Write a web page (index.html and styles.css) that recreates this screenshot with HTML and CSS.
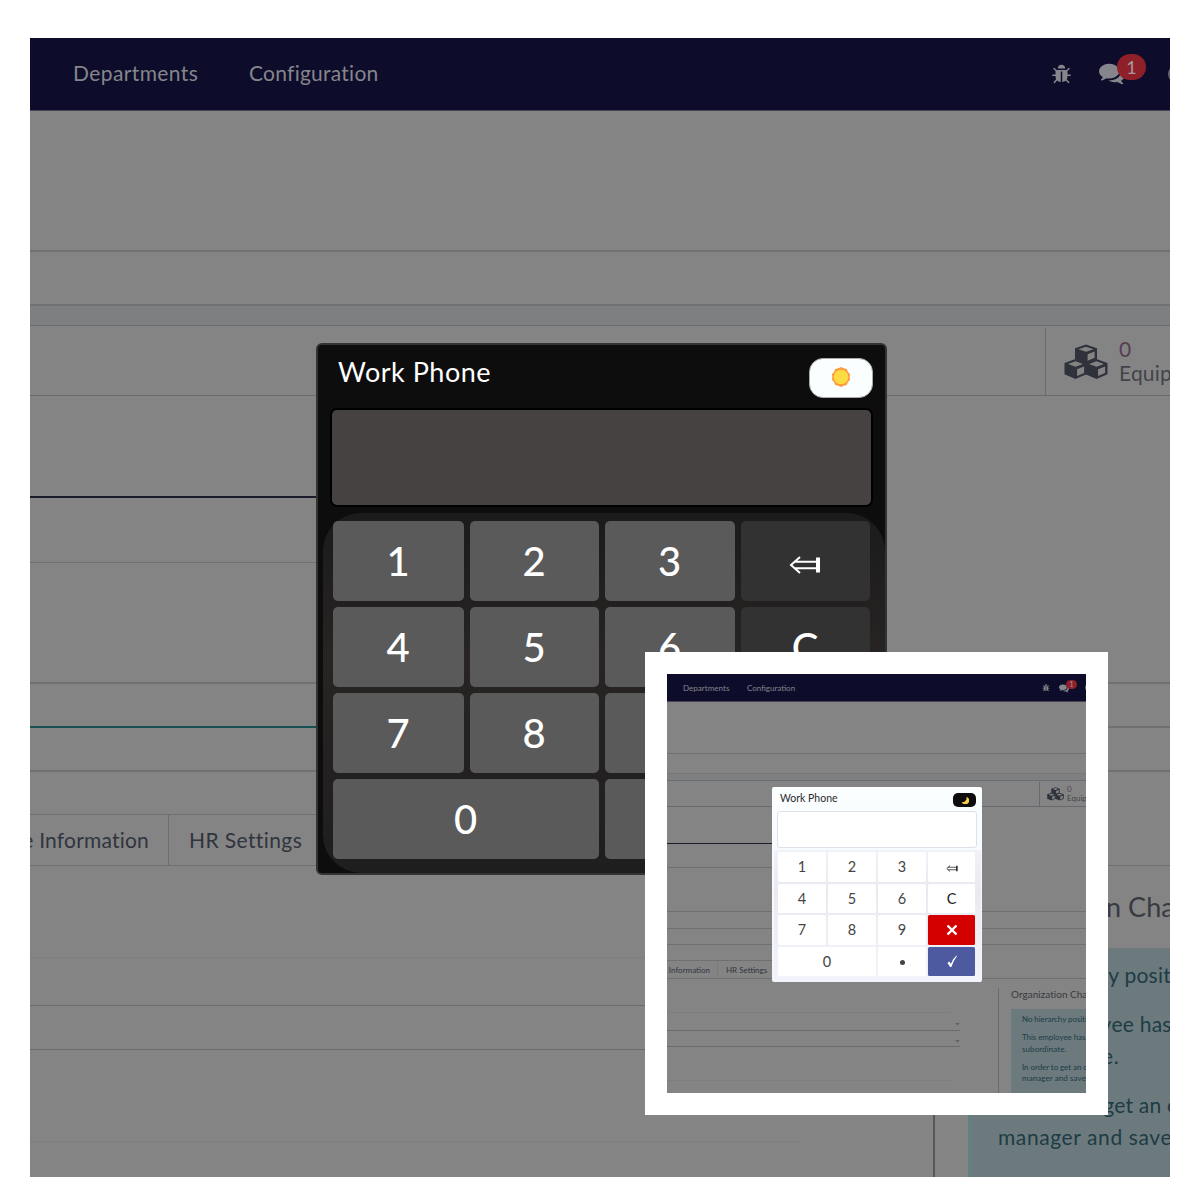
FILE: index.html
```html
<!DOCTYPE html>
<html lang="en">
<head>
<meta charset="utf-8">
<title>Work Phone keypad</title>
<link rel="stylesheet" href="styles.css">
</head>
<body>
<svg class="sprite" aria-hidden="true">
  <symbol id="bug" viewBox="0 0 1792 1792"><path d="M1696 960q0 26-19 45t-45 19h-224q0 171-67 290l208 209q19 19 19 45t-19 45q-18 19-45 19t-45-19l-198-197q-5 5-15 13t-42 28.500-65 36.500-82 29-97 13v-896h-128v896q-51 0-101.500-13.500t-87-33-66-39-43.500-32.500l-15-14-183 207q-20 21-48 21-24 0-43-16-19-18-20.500-44.500t15.500-46.500l202-227q-58-114-58-274h-224q-26 0-45-19t-19-45 19-45 45-19h224v-294l-173-173q-19-19-19-45t19-45 45-19 45 19l173 173h844l173-173q19-19 45-19t45 19 19 45-19 45l-173 173v294h224q26 0 45 19t19 45zm-480-576h-640q0-133 93.500-226.500t226.500-93.500 226.500 93.500 93.500 226.500z"/></symbol>
  <symbol id="comments" viewBox="0 0 1792 1792"><path d="M1408 768q0 139-94 257t-256.500 186.500-353.500 68.500q-86 0-176-16-124 88-278 128-36 9-86 16h-3q-11 0-20.500-8t-11.500-21q-1-3-1-6.500t.5-6.500 2-6l2.500-5 3.500-5.500 4-5 4.500-5 4-4.500q5-6 23-25t26-29.500 22.500-29 25-38.500 20.500-44q-124-72-195-177t-71-224q0-139 94-257t256.500-186.500 353.500-68.500 353.500 68.500 256.500 186.500 94 257zm384 256q0 120-71 224.500t-195 176.500q10 24 20.500 44t25 38.500 22.500 29 26 29.500 23 25q1 1 4 4.500t4.500 5 4 5 3.500 5.500l2.500 5 2 6 .5 6.500-1 6.500q-3 14-13 22t-22 7q-50-7-86-16-154-40-278-128-90 16-176 16-271 0-472-132 58 4 88 4 161 0 309-45t264-129q125-92 192-212t67-254q0-77-23-152 129 71 204 178t75 230z"/></symbol>
  <symbol id="cube" viewBox="0 0 24 24" preserveAspectRatio="none"><path fill="currentColor" d="M12 .5 23 5v13L12 23.500 1 18V5z"/><path fill="#848484" d="M12 3.200 19.500 6.200 12 9.400 4.500 6.200zM13.600 12.200 20.600 9v7.600l-7 3.500z"/></symbol>
  <symbol id="cubes" viewBox="0 0 44 36"><use href="#cube" x="10" y="0" width="24" height="20"/><use href="#cube" x="-.5" y="14.500" width="24" height="21"/><use href="#cube" x="20.500" y="14.500" width="24" height="21"/></symbol>
  <symbol id="back" viewBox="0 0 32 18"><path fill="none" stroke="currentColor" stroke-width="2" d="M11 1 2 9l9 8M5 5.700h24M5 12.300h24"/><path fill="currentColor" d="M27 1.500h4v15h-4z"/></symbol>
  <symbol id="sun" viewBox="0 0 20 20"><path fill="#ff9a3c" d="m10 0 2.600 1.300 3.200.7 1.200 2.900 2 2-.3 3.100.3 3.100-2 2-1.200 2.900-3.200.7L10 20l-2.600-1.300-3.200-.7L3 15.100l-2-2 .3-3.100L1 6.900l2-2L4.200 2l3.200-.7z"/><circle cx="10" cy="10" r="7.300" fill="#ffdb43"/></symbol>
  <symbol id="moon" viewBox="0 0 10 10"><path fill="#f8cf3c" d="M6.800.8a5 5 0 1 1-6 6.900A5.500 5.500 0 0 0 6.800.8z"/></symbol>
  <symbol id="cross" viewBox="0 0 12 12"><path fill="none" stroke="#fff" stroke-width="2.400" d="m1.500 1.500 9 9m0-9-9 9"/></symbol>
  <symbol id="check" viewBox="0 0 12 14"><path fill="#fff" d="M1 8.500 3.400 7l1.300 2.600Q6.700 4 10.600.8h1Q7.500 6 5.300 13H3.900Q2.900 10.500 1 8.500z"/></symbol>
</svg>

<main class="shot large">
  <header class="topbar">
    <nav class="menu"><span class="m1">Departments</span><span class="m2">Configuration</span></nav>
    <svg class="bug"><use href="#bug"/></svg>
    <span class="chat"><svg><use href="#comments"/></svg><b>1</b></span>
    <i class="dot"></i>
  </header>
  <div class="crumbs"></div>
  <div class="pager"></div>
  <div class="gap"></div>
  <div class="stats"><div class="stat"><svg><use href="#cubes"/></svg><p><em>0</em><span>Equipment</span></p></div></div>
  <div class="form">
    <div class="left">
      <div class="r1"></div><div class="r2"></div><div class="r3"></div><div class="r4"></div><div class="r5"></div><div class="r6"></div>
      <div class="tabs"><span class="t1">Private Information</span><span class="t2">HR Settings</span></div>
    </div>
    <div class="right"><div class="q1"></div><div class="q2"></div><div class="q3"></div><div class="q4"></div></div>
  </div>
  <div class="details">
    <div class="fields"><div class="f1"></div><div class="f2"></div><div class="f3"></div><div class="f4"></div></div>
    <aside class="org">
      <h2>Organization Chart</h2>
      <div class="note">
        <p class="n1">No hierarchy position.</p>
        <p class="n2">This employee has no<br><span>subordinate.</span></p>
        <p class="n3">In order to get an org<br><span>manager and save</span></p>
      </div>
    </aside>
  </div>

  <section class="pad dark">
    <div class="head"><h1>Work Phone</h1><span class="toggle"><svg><use href="#sun"/></svg></span></div>
    <div class="display"></div>
    <div class="keys">
      <span>1</span><span>2</span><span>3</span><span class="fn"><svg class="back"><use href="#back"/></svg></span>
      <span>4</span><span>5</span><span>6</span><span class="fn">C</span>
      <span>7</span><span>8</span><span></span><span></span>
      <span class="wide">0</span><span></span><span></span>
    </div>
  </section>
</main>

<div class="frame">
<div class="shot small">
  <header class="topbar">
    <nav class="menu"><span class="m1">Departments</span><span class="m2">Configuration</span></nav>
    <svg class="bug"><use href="#bug"/></svg>
    <span class="chat"><svg><use href="#comments"/></svg><b>1</b></span>
    <i class="dot"></i>
  </header>
  <div class="crumbs"></div>
  <div class="pager"></div>
  <div class="gap"></div>
  <div class="stats"><div class="stat"><svg><use href="#cubes"/></svg><p><em>0</em><span>Equipment</span></p></div></div>
  <div class="form">
    <div class="left">
      <div class="r1"></div><div class="r2"></div><div class="r3"></div><div class="r4"></div><div class="r5"></div><div class="r6"></div>
      <div class="tabs"><span class="t1">Private Information</span><span class="t2">HR Settings</span></div>
    </div>
    <div class="right"><div class="q1"></div><div class="q2"></div><div class="q3"></div><div class="q4"></div></div>
  </div>
  <div class="details">
    <div class="fields"><div class="f1"></div><div class="f2"><i class="caret"></i></div><div class="f3"><i class="caret"></i></div><div class="f4"></div></div>
    <aside class="org">
      <h2>Organization Chart</h2>
      <div class="note">
        <p class="n1">No hierarchy position.</p>
        <p class="n2">This employee has no<br><span>subordinate.</span></p>
        <p class="n3">In order to get an org<br><span>manager and save</span></p>
      </div>
    </aside>
  </div>

  <section class="pad light">
    <div class="head"><h1>Work Phone</h1><span class="toggle"><svg><use href="#moon"/></svg></span></div>
    <div class="display"></div>
    <div class="keys">
      <span>1</span><span>2</span><span>3</span><span class="fn"><svg class="back"><use href="#back"/></svg></span>
      <span>4</span><span>5</span><span>6</span><span class="fn">C</span>
      <span>7</span><span>8</span><span>9</span><span class="cancel"><svg><use href="#cross"/></svg></span>
      <span class="wide">0</span><span><i class="point"></i></span><span class="ok"><svg><use href="#check"/></svg></span>
    </div>
  </section>
</div>
</div>
</body>
</html>
```
FILE: styles.css
```css
* { box-sizing: border-box; }
html { background: #fff; }
body { position: relative; width: 1200px; height: 1200px; margin: 0; padding: 38px 30px 0; overflow: hidden; font-family: Lato, "Open Sans", sans-serif; }
h1, h2, p { margin: 0; font-weight: 400; }
em, i { font-style: normal; }
svg { display: block; flex: none; }
.sprite { position: absolute; width: 0; height: 0; }

/* Dimmed page behind the keypad */
.shot { position: relative; display: flex; flex-direction: column; overflow: hidden; background: #848484; white-space: nowrap; }
.shot > * { flex: none; }
.topbar { display: flex; align-items: center; background: #0d0d2b; border-bottom: 1px solid #464555; color: #85858b; }
.menu { display: flex; flex: 1; }
.topbar svg { fill: #85858b; }
.chat { position: relative; }
.chat b { position: absolute; display: flex; align-items: center; justify-content: center; background: #8f2029; color: #a39a9e; font-weight: 400; }
.dot { border-radius: 50%; background: #65656f; }
.crumbs, .pager { border-bottom: 2px solid #717171; }
.gap { background: #7e7f81; border-bottom: 1px solid #6b6c71; }
.stats { display: flex; justify-content: flex-end; border-bottom: 1px solid #696a70; }
.stat { display: flex; align-items: center; border-left: 1px solid #696a70; color: #2f323b; overflow: hidden; }
.stat p { display: flex; flex-direction: column; color: #41444c; }
.stat em { color: #553e50; }
.form, .details { display: flex; }
.left > div, .right > div { border-bottom: 1px solid #707072; }
.left .r1 { border-color: #1b1c2b; }
.tabs { display: flex; color: #30343f; overflow: hidden; }
.tabs span { display: flex; align-items: center; }
.tabs .t1 { justify-content: flex-end; border-right: 1px solid #6c6d71; }
.fields > div { border-bottom: 1px solid #6c6c6e; }
.fields .f1, .fields .f4 { border-color: #7e7e7e; }
.org { flex: 1; overflow: hidden; color: #383a42; }
.note { background: #6c7a7e; color: #1d3c44; }

/* Large view */
.large { width: 1140px; height: 1139px; font-size: 21px; }
.large .topbar { height: 73px; }
.large .menu { padding: 0 0 3px 43px; }
.large .m1 { width: 176px; letter-spacing: .4px; }
.large .m2 { letter-spacing: .25px; }
.large .bug { width: 21px; height: 21px; margin-right: 27px; }
.large .chat { width: 69px; }
.large .chat svg { width: 26px; height: 26px; margin-top: -2px; }
.large .chat b { left: 18px; top: -8px; width: 29px; height: 26px; border-radius: 13px; font-size: 18px; }
.large .dot { width: 20px; height: 18px; margin-right: -18px; }
.large .crumbs { height: 141px; }
.large .pager { height: 54px; }
.large .gap { height: 20px; }
.large .stats { height: 70px; padding-top: 2px; }
.large .stat { width: 125px; padding-left: 18px; }
.large .stat svg { width: 44px; height: 36px; margin-right: 11px; }
.large .stat p { line-height: 24px; margin-top: -2px; letter-spacing: .2px; }
.large .left { width: 570px; }
.large .right { width: 570px; }
.large .r1 { height: 102px; border-bottom-width: 2px; }
.large .r2 { height: 65px; }
.large .r3 { height: 121px; border-bottom-width: 2px; }
.large .r4 { height: 44px; border-bottom: 2px solid #165052; }
.large .r5 { height: 44px; border-bottom-width: 2px; }
.large .r6 { height: 43px; }
.large .tabs { height: 51px; padding-bottom: 0; }
.large .tabs span { padding-bottom: 2px; }
.large .t1 { width: 139px; padding-right: 19px; letter-spacing: .2px; }
.large .t2 { padding-left: 20px; letter-spacing: .4px; }
.large .q1 { height: 288px; border-bottom-width: 2px; }
.large .q2, .large .q3 { height: 44px; border-bottom-width: 2px; }
.large .q4 { height: 94px; }
.large .details { height: 311px; }
.large .fields { width: 905px; border-right: 2px solid #575757; }
.large .fields > div { width: 770px; }
.large .f1 { height: 92px; }
.large .f2 { height: 48px; }
.large .f3 { height: 44px; }
.large .f4 { height: 92px; }
.large .org { padding: 23px 0 0 33px; }
.large .org h2 { height: 59px; line-height: 36px; font-size: 27px; letter-spacing: .1px; }
.large .note { height: 229px; padding: 11px 0 0 26px; border-left: 4px solid #637f80; line-height: 32px; letter-spacing: .25px; }
.large .note p { margin-bottom: 17px; }
.large .note span { letter-spacing: .6px; }

/* Keypad */
.pad { position: absolute; display: flex; flex-direction: column; }
.head { display: flex; justify-content: space-between; }
.toggle { display: flex; align-items: center; justify-content: center; }
.keys { display: grid; flex: 1; }
.keys span { display: flex; align-items: center; justify-content: center; }
.keys .wide { grid-column: span 2; }
.dark { left: 286px; top: 305px; width: 571px; height: 532px; border: 2px solid #333; border-radius: 6px; background: #0d0d0d; color: #fff; }
.dark .head { height: 63px; padding: 13px 12px 0 20px; }
.dark h1 { font-size: 27px; line-height: 28px; letter-spacing: .5px; }
.dark .toggle { width: 64px; height: 40px; border: 1px solid #aaa; border-radius: 14px; background: #fbfeff; }
.dark .toggle svg { width: 20px; height: 20px; margin-top: -3px; }
.dark .display { height: 99px; margin: 0 12px 0 12px; border: 2px solid #000; border-radius: 7px; background: #464241; }
.dark .keys { margin: 6px 0 0 5px; padding: 8px 15px 14px 10px; grid-template-columns: 131px 129px 130px 129px; grid-template-rows: repeat(4, 80px); gap: 6px; border-radius: 38px 38px 0 38px; background: linear-gradient(#1b1b1b, #272423 40%, #1f1e1e); font-size: 40px; font-weight: 500; }
.dark .keys span { border-radius: 5px; background: #5a5a5a; padding-right: 1px; }
.dark .keys .fn { background: #323232; }
.dark .back { width: 32px; height: 18px; margin-top: 8px; }

/* Inset view */
.frame { position: absolute; left: 645px; top: 652px; width: 463px; height: 463px; padding: 22px; background: #fff; }
.small { width: 419px; height: 419px; font-size: 8px; }
.small .topbar { height: 28px; }
.small .menu { padding-left: 16px; }
.small .m1 { width: 64px; letter-spacing: .04px; }
.small .m2 { letter-spacing: 0; }
.small .bug { width: 8px; height: 8px; margin-right: 9px; }
.small .chat { width: 26px; }
.small .chat svg { width: 10px; height: 10px; }
.small .chat b { left: 7px; top: -3px; width: 11px; height: 9px; border-radius: 5px; font-size: 7px; }
.small .dot { width: 8px; height: 7px; margin-right: -7px; }
.small .crumbs { height: 52px; border-bottom-width: 1px; }
.small .pager { height: 20px; border-bottom-width: 1px; border-color: #77777b; }
.small .gap { height: 7px; }
.small .stats { height: 26px; padding-top: 1px; }
.small .stat { width: 47px; padding-left: 7px; }
.small .stat svg { width: 17px; height: 14px; margin-right: 3px; }
.small .stat p { line-height: 9px; letter-spacing: 0; }
.small .left, .small .right { width: 209.500px; }
.small .r1 { height: 37px; }
.small .r2 { height: 24px; }
.small .r3 { height: 44px; }
.small .r4 { height: 17px; }
.small .r5 { height: 16px; }
.small .r6 { height: 16px; }
.small .tabs { height: 18px; }
.small .t1 { width: 51px; padding-right: 7px; letter-spacing: 0; border-color: #7a7a7a; }
.small .t2 { padding-left: 8px; letter-spacing: 0; }
.small .q1 { height: 105px; }
.small .q2 { height: 17px; }
.small .q3 { height: 16px; }
.small .q4 { height: 34px; }
.small .details { height: 114px; }
.small .fields { width: 332px; background: linear-gradient(#6c6c6e, #6c6c6e) right bottom / 1px 105px no-repeat; }
.small .fields > div { width: 293px; }
.small .f1 { height: 34px; }
.small .fields .f1, .small .fields .f4 { width: 284px; }
.small .f2 { height: 18px; }
.small .f3 { height: 16px; }
.small .f4 { height: 34px; }
.small .f2, .small .f3 { display: flex; justify-content: flex-end; align-items: center; }
.caret { width: 5px; height: 3px; margin-top: 5px; background: #5f5f5f; clip-path: polygon(0 0, 100% 0, 50% 100%); }
.small .org { padding: 8px 0 0 12px; }
.small .org h2 { height: 22px; line-height: 14px; font-size: 10px; letter-spacing: .02px; }
.small .note { height: 90px; padding: 5px 0 0 10px; border-left: 1px solid #637f80; line-height: 11.500px; letter-spacing: -.07px; }
.small .note p { margin-bottom: 6.500px; }
.small .note span { letter-spacing: .08px; }

.light { left: 105px; top: 113px; width: 210px; height: 195px; border-radius: 2px; background: linear-gradient(#fbfeff, #f3f5fd); color: #444; }
.light .head { height: 24px; padding: 6px 6px 0 8px; }
.light h1 { font-size: 10.500px; line-height: 10px; letter-spacing: 0; color: #2b2b2b; }
.light .toggle { width: 23px; height: 14px; border-radius: 5px; background: #0d0d0d; }
.light .toggle svg { width: 8px; height: 8px; }
.light .display { height: 37px; margin: 0 5px; border: 1px solid #dfe1e8; border-radius: 3px; background: #fff; }
.light .keys { margin: 2px 1px 0 2px; padding: 2px 5px 6px 4px; grid-template-columns: 48px 48px 48px 47px; grid-template-rows: 30px 29.500px 29.500px 29.500px; gap: 2px; background: linear-gradient(#f0f1f9, #e9e9f1 30%, #f3f4fb); font-size: 14.500px; }
.light .keys span { border-radius: 1.500px; background: #fff; }
.light .back { width: 12px; height: 7px; margin-top: 3px; }
.light .fn { color: #222; }
.light .keys .cancel { background: #d40000; }
.light .keys .ok { background: #4d5a9f; }
.light .cancel svg { width: 12px; height: 12px; }
.light .ok svg { width: 12px; height: 13px; }
.point { width: 5px; height: 5px; margin-top: 3px; border-radius: 50%; background: #444; }
```
